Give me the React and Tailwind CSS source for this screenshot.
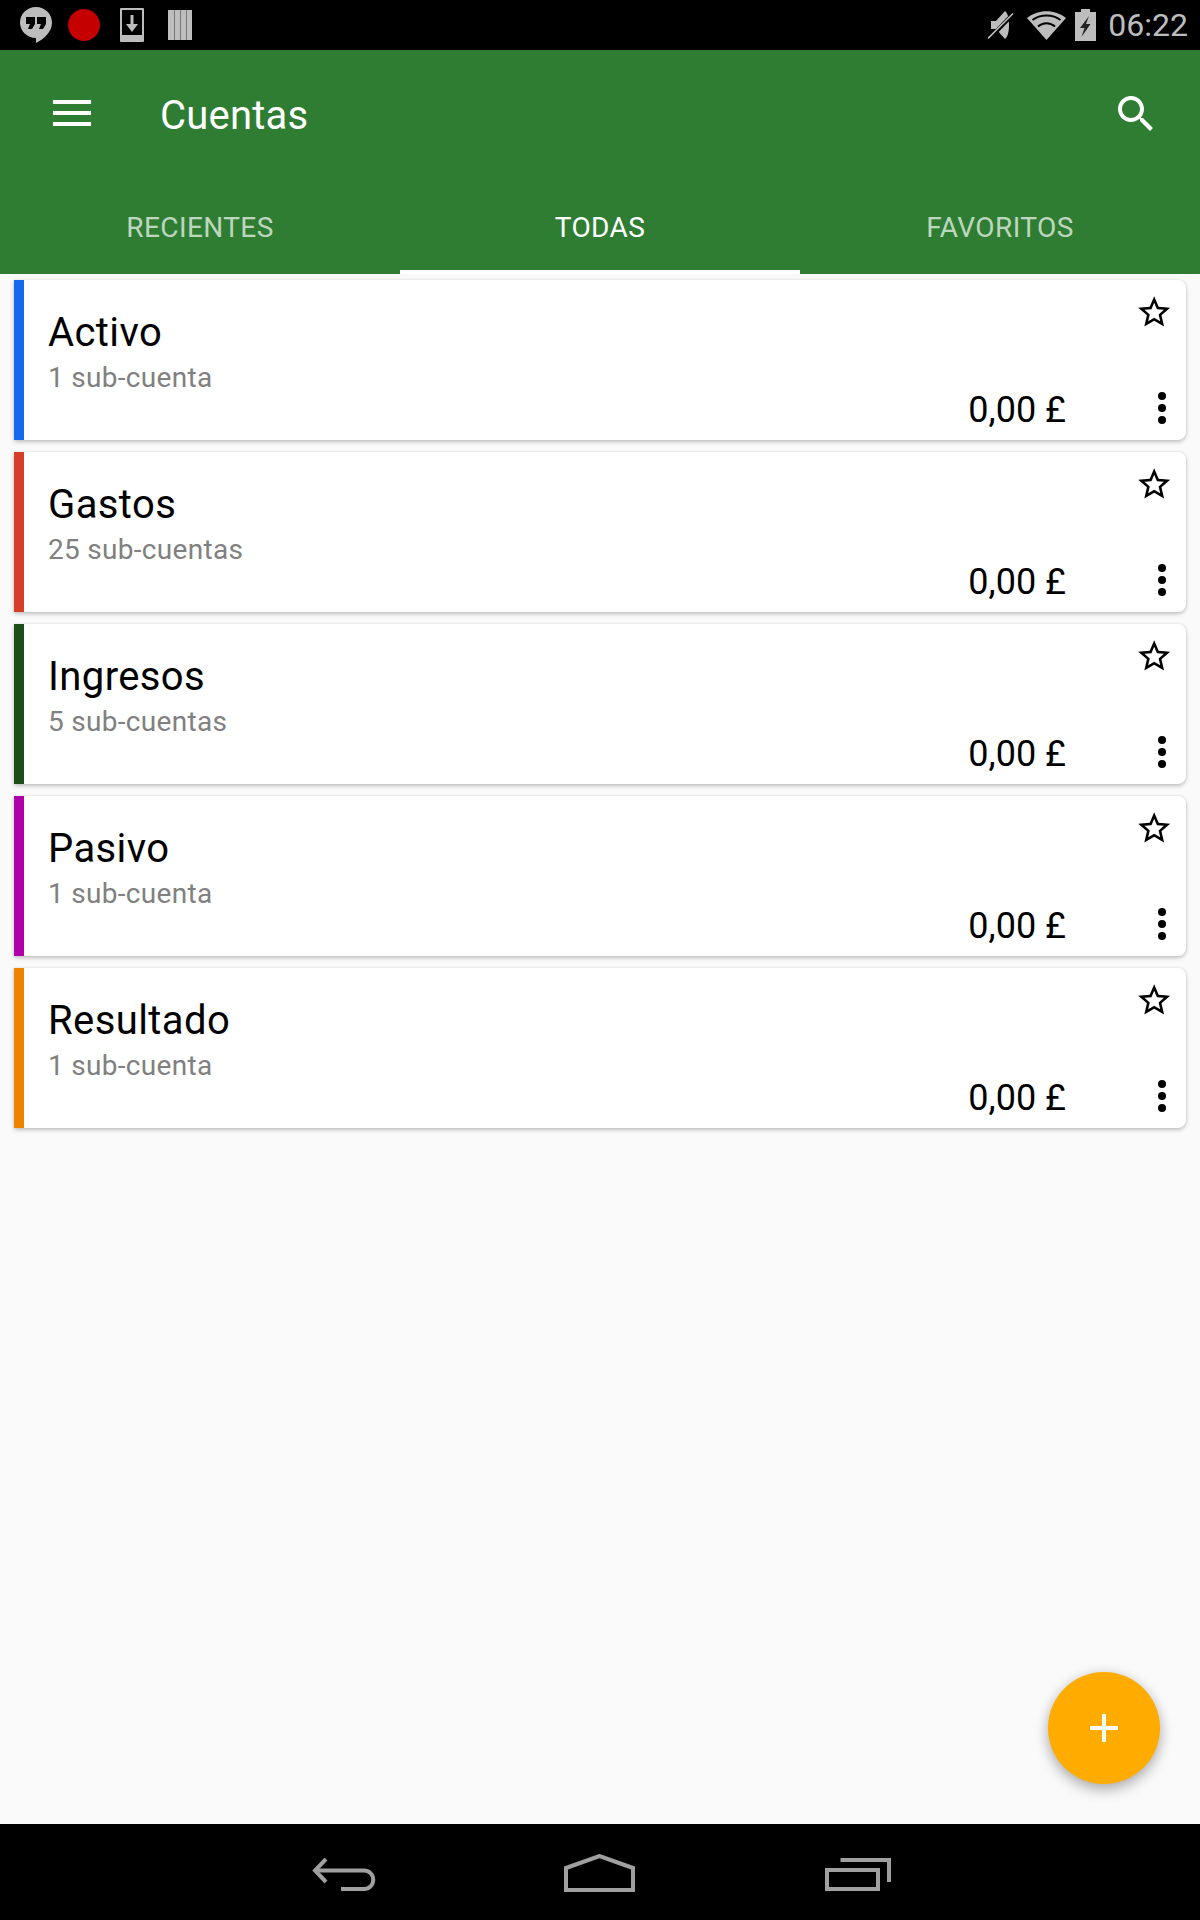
const STAR = "M22 9.24l-7.19-.62L12 2 9.19 8.63 2 9.24l5.46 4.73L5.82 21 12 17.27 18.18 21l-1.63-7.03L22 9.24zM12 15.4l-3.76 2.27 1-4.28-3.32-2.88 4.38-.38L12 6.1l1.71 4.01 4.38.38-3.32 2.88 1 4.28L12 15.4z";
const SEARCH = "M15.5 14h-.79l-.28-.27C15.41 12.59 16 11.11 16 9.5 16 5.91 13.09 3 9.5 3S3 5.91 3 9.5 5.91 16 9.5 16c1.61 0 3.09-.59 4.23-1.57l.27.28v.79l5 4.99L20.49 19l-4.99-5zm-6 0C7.01 14 5 11.99 5 9.5S7.01 5 9.5 5 14 7.01 14 9.5 11.99 14 9.5 14z";

const accounts = [
  { name: "Activo", sub: "1 sub-cuenta", color: "border-l-[#1469ee]" },
  { name: "Gastos", sub: "25 sub-cuentas", color: "border-l-[#d33f2b]" },
  { name: "Ingresos", sub: "5 sub-cuentas", color: "border-l-[#1d4d18]" },
  { name: "Pasivo", sub: "1 sub-cuenta", color: "border-l-[#b000aa]" },
  { name: "Resultado", sub: "1 sub-cuenta", color: "border-l-[#ef8300]" },
];

function StatusBar() {
  return (
    <div className="h-[50px] bg-black flex items-center shrink-0 pl-[20px] pr-[12px]">
      <svg width="32" height="36" viewBox="0 0 32 36">
        <path d="M16 0C7 0 0 7 0 15.500S7 31 16 31v5c8-4 16-11 16-20.500C32 7 25 0 16 0z" fill="#bdbdbd" />
        <path d="M6 10h9v7l-3 5H8l2-5H6zM17 10h9v7l-3 5h-4l2-5h-4z" fill="#000" />
      </svg>
      <div className="w-[32px] h-[32px] rounded-full bg-[#c40000] ml-[16px]" />
      <svg width="24" height="34" viewBox="0 0 24 34" className="ml-[20px]">
        <path fillRule="evenodd" d="M1 0h22a1 1 0 0 1 1 1v32a1 1 0 0 1-1 1H1a1 1 0 0 1-1-1V1a1 1 0 0 1 1-1zM2 2v25h20V2z" fill="#bdbdbd" />
        <path d="M10.500 7h3v9h4.500l-6 8-6-8h4.500z" fill="#bdbdbd" />
      </svg>
      <svg width="24" height="30" viewBox="0 0 24 30" className="ml-[24px]">
        <path d="M0 0h24v30H0z" fill="#bdbdbd" />
        <path d="M6 0h1v30H6zM12 0h1v30h-1zM18 0h1v30h-1z" fill="#777" />
      </svg>
      <div className="flex-1" />
      <svg width="26" height="30" viewBox="0 0 26 30" className="mr-[13px]">
        <path d="M3 11h5l9-10c3 2 4 8 4 14s-1 12-4 14l-9-10H3z" fill="#bdbdbd" />
        <path d="M1 29L26 3" stroke="#000" strokeWidth="4" />
        <path d="M0 28.500L25 3.500" stroke="#bdbdbd" strokeWidth="1.600" />
      </svg>
      <svg width="39" height="29" viewBox="0 0 39 29" className="mr-[9px]">
        <path d="M19.500 29L0 7C11-2 28-2 39 7z" fill="#bdbdbd" />
        <path d="M5.500 9C13 3 26 3 33.500 9" stroke="#000" strokeWidth="2" fill="none" />
        <path d="M11 15.500C16 11 23 11 28 15.500" stroke="#000" strokeWidth="2" fill="none" />
      </svg>
      <svg width="21" height="32" viewBox="0 0 21 32" className="mr-[12px]">
        <path d="M6 0h9v3h6v29H0V3h6z" fill="#bdbdbd" />
        <path d="M14 7L5 19h4.500l-3 9 9-13h-4.500z" fill="#222" />
      </svg>
      <span className="text-[32px] leading-none text-[#bdbdbd] font-['Roboto',sans-serif]">06:22</span>
    </div>
  );
}

function AppBar() {
  return (
    <div className="h-[224px] bg-[#2e7d32] shrink-0 flex flex-col text-white font-['Roboto',sans-serif]">
      <div className="h-[110px] flex items-center pl-[53px] pr-[40px]">
        <svg width="38" height="26" viewBox="0 0 38 26" className="mt-[16px]">
          <path d="M0 0h38v4H0zM0 11h38v4H0zM0 22h38v4H0z" fill="#fff" />
        </svg>
        <span className="ml-[69px] text-[40px] tracking-[0.2px] leading-none flex-1 mt-[21px]">Cuentas</span>
        <svg width="48" height="48" viewBox="0 0 24 24" className="mt-[18px]">
          <path d={SEARCH} fill="#fff" />
        </svg>
      </div>
      <div className="flex-1 flex text-[28px] tracking-[0.4px]">
        <div className="flex-1 flex items-center justify-center pt-[26px] border-b-[4px] border-transparent text-white/70">RECIENTES</div>
        <div className="w-[400px] flex items-center justify-center pt-[26px] border-b-[4px] border-white">TODAS</div>
        <div className="flex-1 flex items-center justify-center pt-[26px] border-b-[4px] border-transparent text-white/70">FAVORITOS</div>
      </div>
    </div>
  );
}

function Card({ name, sub, color }) {
  return (
    <div className={`h-[160px] bg-white border-l-[10px] ${color} rounded-r-[8px] shadow-[0_2px_4px_rgba(0,0,0,0.22),0_0_3px_rgba(0,0,0,0.08)] font-['Roboto',sans-serif] flex`}>
      <div className="flex-1 pl-[24px] pt-[31px]">
        <div className="text-[40px] tracking-[0.4px] leading-[44px] text-black">{name}</div>
        <div className="text-[28px] tracking-[0.3px] leading-[32px] text-[#808080] mt-[7px]">{sub}</div>
      </div>
      <div className="flex flex-col items-end">
        <svg width="38.400" height="38.400" viewBox="0 0 24 24" className="mt-[13px] mr-[13px]">
          <path d={STAR} fill="#000" />
        </svg>
        <div className="flex items-start mt-[53px]">
          <span className="text-[36px] leading-[48px] text-black mr-[72px] mt-[2px]">0,00 £</span>
          <svg width="48" height="48" viewBox="0 0 24 24">
            <circle cx="12" cy="6" r="2" fill="#000" />
            <circle cx="12" cy="12" r="2" fill="#000" />
            <circle cx="12" cy="18" r="2" fill="#000" />
          </svg>
        </div>
      </div>
    </div>
  );
}

function NavBar() {
  return (
    <div className="h-[96px] bg-black shrink-0 flex items-start pl-[312px] pt-[30px]">
      <svg width="64" height="33" viewBox="0 0 64 33" fill="none" stroke="#a0a0a0" strokeWidth="4" className="mt-[4px]">
        <path d="M14 1L3 12.500 14 24" />
        <path d="M3 12.500H52A9.250 9.250 0 0 1 52 31H29" />
      </svg>
      <svg width="71" height="38" viewBox="0 0 71 38" fill="none" stroke="#a0a0a0" strokeWidth="4" className="ml-[188px]">
        <path d="M2 14L35.500 2 69 14V36H2z" />
      </svg>
      <svg width="66" height="33" viewBox="0 0 66 33" fill="none" stroke="#a0a0a0" strokeWidth="4" className="ml-[190px] mt-[4px]">
        <path d="M15.500 2H64V24" />
        <path d="M2 12H53V31H2z" />
      </svg>
    </div>
  );
}

export default function App() {
  return (
    <div className="w-[1200px] h-[1920px] flex flex-col bg-[#fafafa] overflow-hidden">
      <StatusBar />
      <AppBar />
      <div className="relative flex-1">
        <div className="flex flex-col gap-[12px] pt-[6px] pl-[14px] pr-[14px]">
          {accounts.map((a) => (
            <Card key={a.name} {...a} />
          ))}
        </div>
        <div className="absolute left-[1048px] top-[1398px] w-[112px] h-[112px] rounded-full bg-[#ffab00] shadow-[0_6px_14px_rgba(0,0,0,0.28),0_0_12px_rgba(0,0,0,0.08)] flex items-center justify-center">
          <svg width="28" height="28" viewBox="0 0 28 28">
            <path d="M12 0h4v12h12v4H16v12h-4V16H0v-4h12z" fill="#fff" />
          </svg>
        </div>
      </div>
      <NavBar />
    </div>
  );
}
